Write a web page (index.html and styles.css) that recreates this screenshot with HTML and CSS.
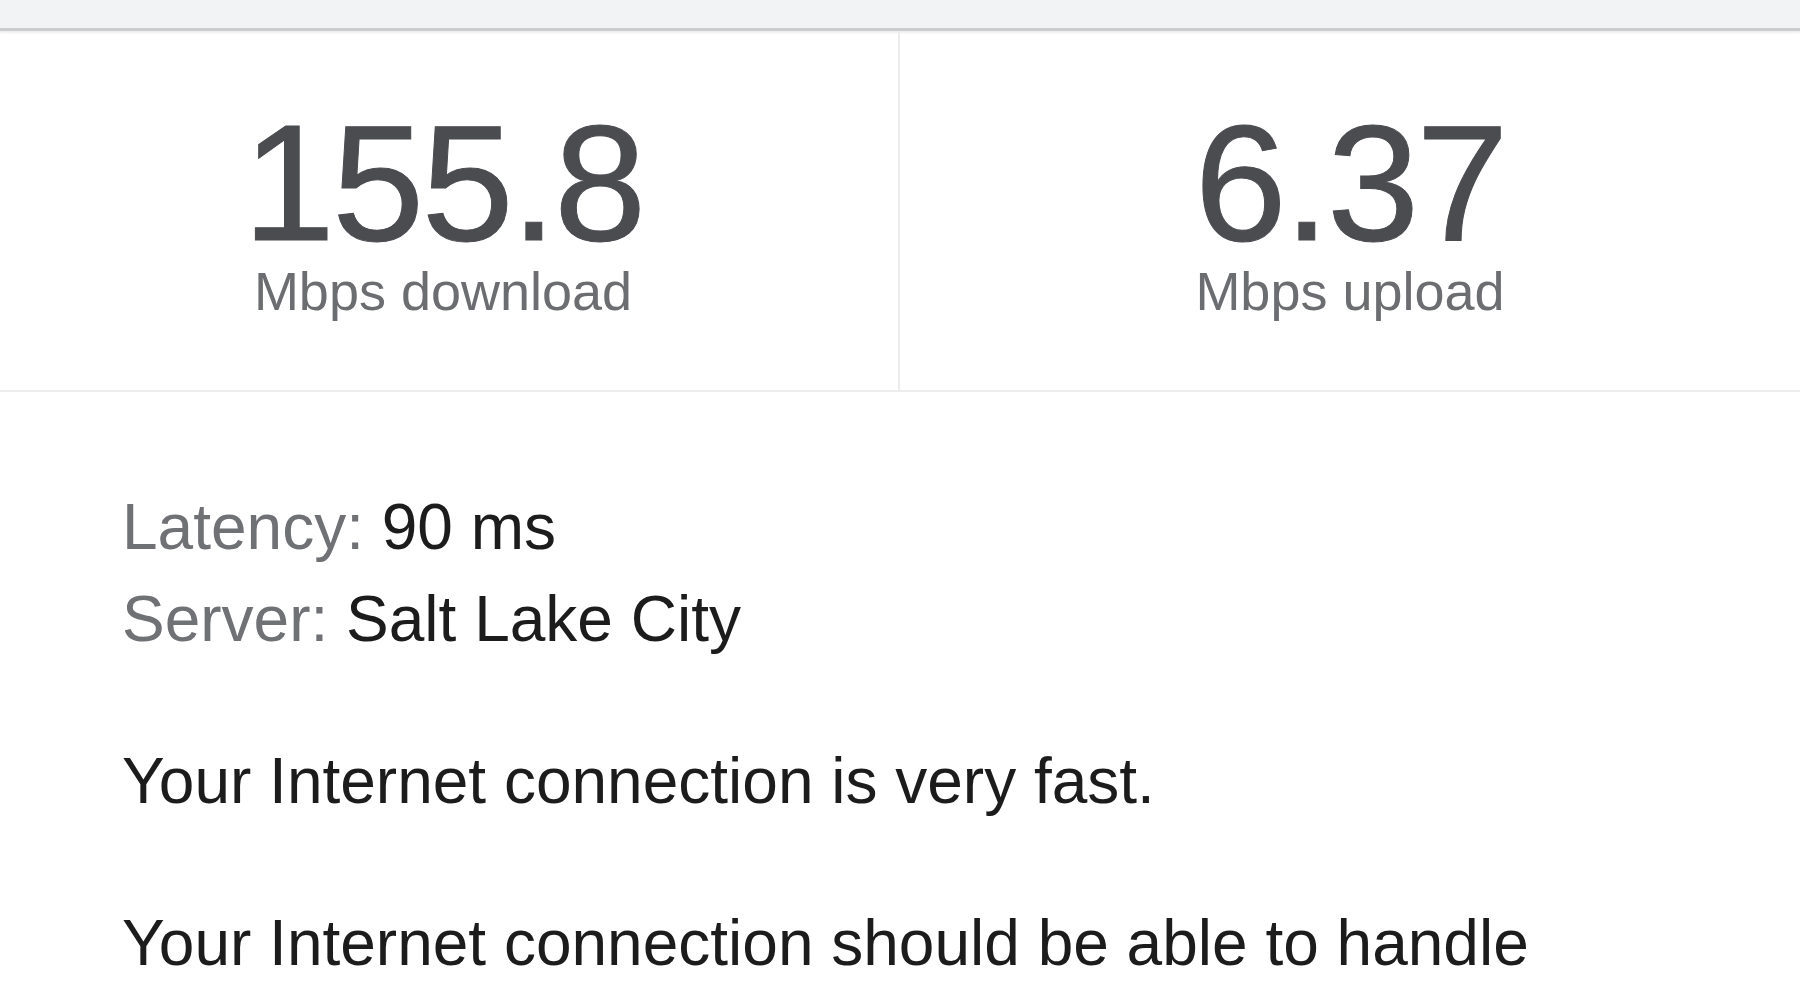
FILE: index.html
```html
<!DOCTYPE html>
<html lang="en">
<head>
<meta charset="utf-8">
<title>Speed test</title>
<link rel="stylesheet" href="styles.css">
</head>
<body>
<div class="topbar"></div>
<div class="stats">
  <div class="stat stat-first">
    <div class="stat-value">155.8</div>
    <div class="stat-label">Mbps download</div>
  </div>
  <div class="stat">
    <div class="stat-value">6.37</div>
    <div class="stat-label">Mbps upload</div>
  </div>
</div>
<div class="details">
  <div class="meta">
    <div class="meta-row"><span class="meta-key">Latency:</span> <span class="meta-val">90 ms</span></div>
    <div class="meta-row"><span class="meta-key">Server:</span> <span class="meta-val">Salt Lake City</span></div>
  </div>
  <p class="para">Your Internet connection is very fast.</p>
  <p class="para">Your Internet connection should be able to handle</p>
</div>
</body>
</html>
```

FILE: styles.css
```css
html, body {
  margin: 0;
  padding: 0;
  background: #ffffff;
  font-family: "Liberation Sans", Arial, Helvetica, sans-serif;
  overflow: hidden;
}

.topbar {
  height: 28px;
  background: #f2f3f5;
  border-bottom: 3px solid #cbccce;
  box-shadow: 0 2px 2px rgba(0, 0, 0, 0.07);
}

.stats {
  display: grid;
  grid-template-columns: 900px 1fr;
  border-bottom: 2px solid #ececec;
  height: 361px;
  box-sizing: border-box;
}

.stat {
  display: flex;
  flex-direction: column;
  align-items: center;
  padding-top: 69px;
}

.stat-first {
  border-right: 2px solid #ececec;
  padding-right: 12px;
}

.stat-value {
  font-size: 166px;
  line-height: 166px;
  color: #4b4c50;
  letter-spacing: -3px;
  -webkit-text-stroke: 1px #4b4c50;
}

.stat-label {
  font-size: 54px;
  line-height: 50px;
  color: #6c6d70;
}

.details {
  padding: 89px 0 0 122px;
}

.meta-row {
  font-size: 64px;
  line-height: 92px;
  color: #1c1c1c;
}

.meta-key {
  color: #6f7175;
}

.para {
  margin: 70px 0 0 0;
  font-size: 64px;
  line-height: 92px;
  color: #1c1c1c;
}
```
